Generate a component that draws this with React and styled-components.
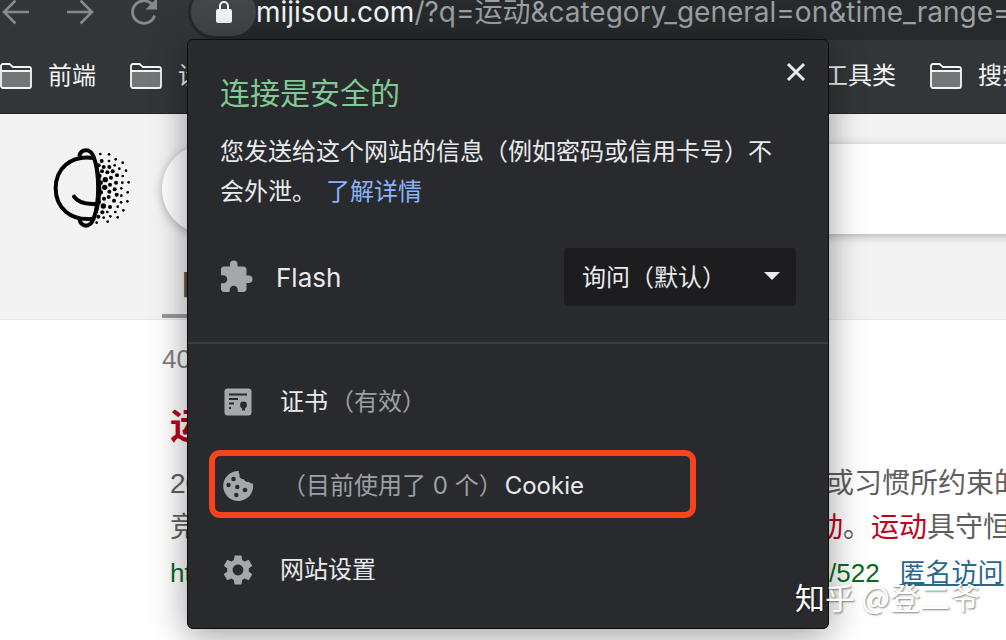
import React from 'react';
import styled, { createGlobalStyle } from 'styled-components';
import { MdExtension, MdSettings } from 'react-icons/md';

const GlobalStyle = createGlobalStyle`
  * {
    box-sizing: border-box;
  }
  body {
    margin: 0;
    background: #ffffff;
    font-family: Inter, 'Noto Sans CJK SC', sans-serif;
  }
  button,
  input,
  select {
    font-family: inherit;
  }
`;

const Browser = styled.div`
  position: relative;
  min-height: 100vh;
  overflow: hidden;
`;

const Toolbar = styled.div`
  display: flex;
  align-items: flex-end;
  height: 40px;
  background: #333638;
`;

const NavButtons = styled.div`
  display: flex;
  flex: none;
  width: 188px;
  height: 56px;
`;

const NavButton = styled.button`
  display: flex;
  align-items: center;
  justify-content: center;
  flex: none;
  width: 64px;
  padding: 0;
  border: 0;
  background: none;
  color: #86898c;
  &:first-child {
    width: 48px;
    padding-right: 16px;
  }
`;

const Omnibox = styled.div`
  display: flex;
  align-items: center;
  flex: 1;
  min-width: 0;
  height: 56px;
  padding-left: 3px;
  border-radius: 28px 0 0 28px;
  background: #272a2c;
  overflow: hidden;
`;

const LockButton = styled.button`
  display: flex;
  align-items: center;
  justify-content: center;
  flex: none;
  width: 65px;
  height: 48px;
  padding: 0;
  border: 0;
  border-radius: 24px;
  background: #434648;
  color: #f1f3f4;
`;

const Address = styled.div`
  white-space: nowrap;
  font-size: 28px;
  line-height: 32px;
  color: #9aa0a3;
`;

const Host = styled.span`
  color: #f1f3f4;
`;

const BookmarkBar = styled.nav`
  display: flex;
  align-items: center;
  height: 74px;
  border-bottom: 1px solid #232526;
  background: #333638;
  overflow: hidden;
`;

const BookmarkGroup = styled.div`
  display: flex;
  gap: 34px;
  flex: none;
  &:first-child {
    flex-basis: 776px;
  }
`;

const Bookmark = styled.button`
  display: flex;
  align-items: center;
  gap: 16px;
  flex: none;
  padding: 0 0 2px;
  border: 0;
  background: none;
  color: #f1f3f4;
  font-size: 24px;
  line-height: 36px;
`;

const SearchHeader = styled.header`
  height: 206px;
  border-bottom: 1px solid #e8e8e8;
  background: #f3f3f3;
  overflow: hidden;
`;

const SearchRow = styled.div`
  display: flex;
  gap: 22px;
  padding: 26px 0 0 40px;
  > svg {
    flex: none;
  }
`;

const SearchForm = styled.form`
  flex: 0 0 1100px;
  padding-top: 4px;
`;

const SearchInput = styled.input`
  display: block;
  width: 100%;
  height: 90px;
  padding: 0 40px;
  border: 0;
  border-radius: 45px;
  background: #ffffff;
  box-shadow: 0 2px 10px rgba(0, 0, 0, 0.28);
  font-size: 28px;
`;

const Tabs = styled.nav`
  display: flex;
  align-items: flex-end;
  height: 83px;
  padding-left: 162px;
`;

const Tab = styled.a`
  height: 66px;
  padding: 0 20px;
  border-bottom: 4px solid #999999;
  color: #555555;
  font-size: 28px;
  font-weight: 700;
  line-height: 66px;
  text-decoration: none;
`;

const Results = styled.main`
  padding: 23px 0 0 162px;
  font-family: 'Liberation Sans', 'Noto Sans CJK SC', sans-serif;
  white-space: nowrap;
`;

const ResultCount = styled.p`
  margin: 0;
  color: #808080;
  font-size: 26px;
  line-height: 32px;
`;

const Result = styled.article`
  padding: 28px 0 0 8px;
`;

const ResultTitle = styled.h3`
  margin: 0 0 11px;
  color: #b8001c;
  font-size: 36px;
  font-weight: 700;
  line-height: 48px;
`;

const SnippetLine = styled.div`
  display: flex;
  color: #5f5f5f;
  font-size: 28px;
  line-height: 44px;
`;

const LineStart = styled.span`
  flex: 0 0 ${({ $width }) => $width}px;
`;

const Keyword = styled.em`
  color: #c2001b;
  font-style: normal;
`;

const UrlLine = styled(SnippetLine)`
  color: #0b6b23;
  font-size: 26px;
  line-height: 46px;
`;

const ProxyLink = styled.a`
  margin-left: 20px;
  color: #29688a;
  text-decoration: underline;
`;

const Popup = styled.section`
  position: absolute;
  top: 39px;
  left: 187px;
  width: 642px;
  padding-bottom: 16px;
  border: 1px solid #0c0d0e;
  border-radius: 6px;
  background: #292a2d;
  box-shadow: 0 6px 36px rgba(0, 0, 0, 0.4);
  color: #e8eaed;
`;

const PopupHead = styled.div`
  display: flex;
  justify-content: space-between;
  padding: 14px 14px 0 32px;
`;

const PopupTitle = styled.h2`
  margin: 15px 0 0;
  color: #81c995;
  font-size: 30px;
  font-weight: 400;
  line-height: 48px;
`;

const CloseButton = styled.button`
  display: flex;
  align-items: center;
  justify-content: center;
  width: 36px;
  height: 36px;
  padding: 0;
  border: 0;
  background: none;
  color: #e8eaed;
`;

const Description = styled.p`
  margin: 15px 40px 0 32px;
  font-size: 24px;
  line-height: 40px;
`;

const LearnMore = styled.a`
  margin-left: 10px;
  color: #8ab4f8;
  text-decoration: none;
`;

const Permission = styled.div`
  display: flex;
  align-items: center;
  margin: 36px 32px 36px 30px;
  > svg {
    color: #a5a7aa;
  }
`;

const PermissionLabel = styled.label`
  flex: 1;
  margin-left: 22px;
  font-size: 26px;
`;

const SelectBox = styled.div`
  position: relative;
  width: 232px;
`;

const Select = styled.select`
  display: block;
  width: 100%;
  height: 58px;
  padding: 0 48px 0 18px;
  appearance: none;
  border: 0;
  border-radius: 4px;
  background: #1d1d1f;
  color: #e8eaed;
  font-size: 24px;
`;

const SelectArrow = styled.svg`
  position: absolute;
  top: 24px;
  right: 16px;
  pointer-events: none;
`;

const Menu = styled.div`
  padding-top: 16px;
  border-top: 2px solid #3c3d41;
`;

const MenuItem = styled.button`
  position: relative;
  display: flex;
  align-items: center;
  width: 100%;
  height: 84px;
  padding: 0 32px;
  border: 0;
  background: none;
  color: #e8eaed;
  font-size: 24px;
  line-height: 36px;
  white-space: pre;
`;

const MenuIcon = styled.span`
  display: flex;
  justify-content: center;
  width: 36px;
  margin-right: 24px;
  color: #a5a7aa;
`;

const Muted = styled.span`
  margin: 0 2px;
  color: #9aa0a6;
`;

const Highlight = styled.span`
  position: absolute;
  top: 6px;
  left: 21px;
  width: 487px;
  height: 68px;
  border: 6px solid #f8431f;
  border-radius: 11px;
`;

const Watermark = styled.div`
  position: absolute;
  right: 26px;
  bottom: 22px;
  color: #ffffff;
  font-family: 'Noto Sans CJK SC', sans-serif;
  font-size: 30px;
  line-height: 44px;
  text-shadow: 1px 1px 2px rgba(0, 0, 0, 0.5);
`;

const ArrowIcon = ({ flip }) => (
  <svg width="28" height="28" viewBox="0 0 28 28" fill="none" stroke="currentColor" strokeWidth="2.6">
    <path d={flip ? 'M1 14h25M14.5 2.5 26 14 14.5 25.5' : 'M27 14H2M13.5 2.5 2 14l11.5 11.5'} />
  </svg>
);

const ReloadIcon = () => (
  <svg width="28" height="28" viewBox="0 0 28 28" fill="none">
    <path d="M24.6 17.5A11.3 11.3 0 1 1 21.8 6" stroke="currentColor" strokeWidth="2.8" />
    <path d="M27 0v11.5H15.5z" fill="currentColor" />
  </svg>
);

const LockIcon = () => (
  <svg width="16" height="22" viewBox="0 0 16 22">
    <rect y="8" width="16" height="14" rx="2" fill="currentColor" />
    <path d="M4 9V5a4 4 0 0 1 8 0v4" fill="none" stroke="currentColor" strokeWidth="2" />
  </svg>
);

const FolderIcon = () => (
  <svg width="32" height="26" viewBox="0 0 32 26">
    <path d="M1 8h30v15a2 2 0 0 1-2 2H3a2 2 0 0 1-2-2z" fill="#737577" />
    <path
      d="M1 8V3a2 2 0 0 1 2-2h6.5l3.5 3H29a2 2 0 0 1 2 2v17a2 2 0 0 1-2 2H3a2 2 0 0 1-2-2V8h30"
      fill="none"
      stroke="#f4f5f6"
      strokeWidth="1.8"
    />
  </svg>
);

const CertificateIcon = () => (
  <svg width="28" height="28" viewBox="0 0 28 28">
    <rect x="0.5" y="0.5" width="27" height="27" rx="3" fill="currentColor" />
    <path d="M5 6.5h18M5 11h9M5 15.5h5M5 20h2" stroke="#292a2d" strokeWidth="2.2" />
    <circle cx="19.5" cy="17" r="3.4" fill="#292a2d" />
    <path d="M18 19h3v4l-1.5-1-1.5 1z" fill="#292a2d" />
  </svg>
);

const CookieIcon = () => (
  <svg width="30" height="30" viewBox="0 0 30 30">
    <path
      d="M16 0A15 15 0 1 0 30 12.5q-3 .5-4.2-1.7Q22 11.5 21 8.5 15.5 7.5 16.7 4 15.3 2 16 0z"
      fill="currentColor"
    />
    <g fill="#292a2d">
      <circle cx="10.5" cy="8" r="2.3" />
      <circle cx="5.5" cy="14" r="2.2" />
      <circle cx="14.3" cy="16" r="2.2" />
      <circle cx="22" cy="19" r="2.3" />
      <circle cx="13.3" cy="24" r="2.2" />
    </g>
  </svg>
);

// [cx, cy, r]
const LOGO_DOTS = [
  [181, 42, 4], [207, 43, 4], [227, 58, 4], [248, 68, 4], [185, 63, 6], [207, 63, 4],
  [176, 76, 6], [191, 81, 6], [208, 81, 6], [224, 76, 4], [238, 86, 4], [258, 92, 4],
  [186, 94, 6], [202, 97, 6], [218, 94, 6], [231, 106, 6], [248, 108, 4], [178, 108, 7],
  [196, 119, 8], [213, 113, 6], [228, 128, 6], [247, 128, 4], [266, 127, 4], [182, 128, 7],
  [210, 134, 6], [194, 142, 8], [224, 148, 6], [244, 145, 4], [263, 157, 4], [208, 155, 6],
  [182, 157, 7], [230, 164, 6], [244, 167, 4], [206, 171, 6], [192, 176, 6], [222, 182, 6],
  [243, 187, 4], [262, 184, 4], [176, 186, 7], [190, 198, 8], [210, 201, 6], [233, 200, 4],
  [250, 211, 4], [187, 217, 6], [202, 216, 4], [226, 216, 4], [175, 230, 6], [191, 233, 4],
  [211, 229, 4], [233, 232, 4], [203, 245, 4], [170, 248, 4],
];

const Logo = () => (
  <svg width="100" height="95" viewBox="0 0 300 285" role="img" aria-label="秘迹搜索">
    <g fill="none" stroke="#000000" strokeWidth="12">
      <path d="M160 54C90 44 47 88 47 145s43 100 115 91" />
      <path d="M118 50q3-19 20-19 15 0 23 19c18 50 18 137 0 186q-8 21-23 21-16 0-20-21" />
      <path d="M102 170q18 26 70 21" strokeLinecap="round" />
    </g>
    <path d="M166 70q22 75 0 152l8-4q20-70 0-142z" fill="#000000" />
    {LOGO_DOTS.map(([cx, cy, r]) => (
      <circle key={`${cx}-${cy}`} cx={cx} cy={cy} r={r} fill="#000000" />
    ))}
  </svg>
);

const Folder = ({ name }) => (
  <Bookmark type="button">
    <FolderIcon />
    {name}
  </Bookmark>
);

const BrowserChrome = () => (
  <>
    <Toolbar>
      <NavButtons>
        <NavButton type="button" aria-label="后退">
          <ArrowIcon />
        </NavButton>
        <NavButton type="button" aria-label="前进">
          <ArrowIcon flip />
        </NavButton>
        <NavButton type="button" aria-label="重新加载">
          <ReloadIcon />
        </NavButton>
      </NavButtons>
      <Omnibox>
        <LockButton type="button" aria-label="查看网站信息">
          <LockIcon />
        </LockButton>
        <Address>
          <Host>mijisou.com</Host>/?q=运动&amp;category_general=on&amp;time_range=
        </Address>
      </Omnibox>
    </Toolbar>
    <BookmarkBar>
      <BookmarkGroup>
        <Folder name="前端" />
        <Folder name="设计" />
      </BookmarkGroup>
      <BookmarkGroup>
        <Folder name="工具类" />
        <Folder name="搜索" />
      </BookmarkGroup>
    </BookmarkBar>
  </>
);

const SearchPage = () => (
  <>
    <SearchHeader>
      <SearchRow>
        <Logo />
        <SearchForm>
          <SearchInput type="text" aria-label="搜索" />
        </SearchForm>
      </SearchRow>
      <Tabs>
        <Tab href="#web">网页</Tab>
      </Tabs>
    </SearchHeader>
    <Results>
      <ResultCount>40</ResultCount>
      <Result>
        <ResultTitle>运动</ResultTitle>
        <SnippetLine>
          <LineStart $width={656}>20</LineStart>
          <span>或习惯所约束的</span>
        </SnippetLine>
        <SnippetLine>
          <LineStart $width={645}>竞</LineStart>
          <span>
            <Keyword>动</Keyword>。<Keyword>运动</Keyword>具守恒
          </span>
        </SnippetLine>
        <UrlLine>
          <LineStart $width={659}>ht</LineStart>
          <span>/522</span>
          <ProxyLink href="#proxy">匿名访问</ProxyLink>
        </UrlLine>
      </Result>
    </Results>
  </>
);

const SiteInfoPopup = () => (
  <Popup role="dialog" aria-labelledby="site-info-title">
    <PopupHead>
      <PopupTitle id="site-info-title">连接是安全的</PopupTitle>
      <CloseButton type="button" aria-label="关闭">
        <svg width="20" height="20" viewBox="0 0 20 20" stroke="currentColor" strokeWidth="3">
          <path d="m2 2 16 16M18 2 2 18" />
        </svg>
      </CloseButton>
    </PopupHead>
    <Description>
      您发送给这个网站的信息（例如密码或信用卡号）不会外泄。
      <LearnMore href="#learn-more">了解详情</LearnMore>
    </Description>
    <Permission>
      <MdExtension size={36} />
      <PermissionLabel htmlFor="flash">Flash</PermissionLabel>
      <SelectBox>
        <Select id="flash" defaultValue="ask">
          <option value="ask">询问（默认）</option>
          <option value="allow">允许</option>
          <option value="block">禁止</option>
        </Select>
        <SelectArrow width="16" height="8" viewBox="0 0 16 8">
          <path d="M0 0h16L8 8z" fill="#e8eaed" />
        </SelectArrow>
      </SelectBox>
    </Permission>
    <Menu>
      <MenuItem type="button">
        <MenuIcon>
          <CertificateIcon />
        </MenuIcon>
        <span>
          证书<Muted>（有效）</Muted>
        </span>
      </MenuItem>
      <MenuItem type="button">
        <MenuIcon>
          <CookieIcon />
        </MenuIcon>
        <span>
          <Muted>（目前使用了 0 个）</Muted>Cookie
        </span>
        <Highlight />
      </MenuItem>
      <MenuItem type="button">
        <MenuIcon>
          <MdSettings size={36} />
        </MenuIcon>
        <span>网站设置</span>
      </MenuItem>
    </Menu>
  </Popup>
);

const App = () => (
  <>
    <GlobalStyle />
    <Browser>
      <BrowserChrome />
      <SearchPage />
      <SiteInfoPopup />
      <Watermark>知乎 @登二爷</Watermark>
    </Browser>
  </>
);

export default App;
